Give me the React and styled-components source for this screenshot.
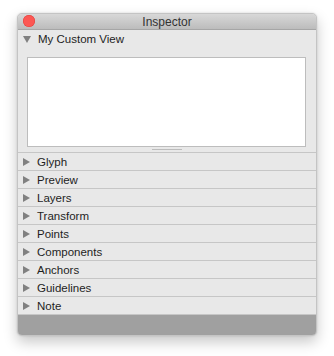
import React from 'react';
import styled, { createGlobalStyle } from 'styled-components';

const GlobalStyle = createGlobalStyle`
  body {
    margin: 0;
    background: #ffffff;
    font-family: "Liberation Sans", Arial, sans-serif;
  }
`;

const Page = styled.div`
  padding: 13px 0 0 17px;
  width: 334px;
  height: 356px;
  box-sizing: border-box;
`;

const Window = styled.div`
  width: 300px;
  box-sizing: border-box;
  border: 1px solid #c4c4c4;
  border-radius: 5px;
  overflow: hidden;
  background: #e8e8e8;
  box-shadow: 0 6px 14px rgba(0, 0, 0, 0.22), 0 0 2px rgba(0, 0, 0, 0.15);
`;

const TitleBar = styled.div`
  position: relative;
  height: 15px;
  display: flex;
  align-items: center;
  justify-content: center;
  background: linear-gradient(#d8d8d8, #bcbcbc);
  border-bottom: 1px solid #a6a6a6;
  font-size: 12px;
  color: #333333;
`;

const CloseDot = styled.span`
  position: absolute;
  left: 5px;
  top: 1px;
  width: 12px;
  height: 12px;
  border-radius: 50%;
  background: #fc5753;
  box-shadow: inset 0 0 0 0.5px #df3d39;
`;

const Row = styled.div`
  height: 17px;
  display: flex;
  align-items: center;
  padding-left: 5px;
  border-bottom: 1px solid #c6c6c6;
  font-size: 11.5px;
  color: #1e1e1e;
`;

const Header = styled(Row)`
  height: 18px;
  border-bottom: none;
`;

const Arrow = styled.span`
  width: 0;
  height: 0;
  border-style: solid;
  border-color: transparent;
  ${p => p.$open
    ? `border-width: 7px 4px 0 4px; border-top-color: #808080; margin-right: 7px;`
    : `border-width: 4px 0 4px 7px; border-left-color: #808080; margin-right: 7px;`}
`;

const Content = styled.div`
  padding: 9px 10px 0 9px;
  border-bottom: 1px solid #c6c6c6;
`;

const TextBox = styled.div`
  height: 88px;
  background: #ffffff;
  border: 1px solid #bdbdbd;
`;

const Grip = styled.div`
  display: flex;
  justify-content: center;
  padding: 2px 0 2px;
  margin-left: -9px;
  margin-right: -10px;
`;

const GripLine = styled.span`
  width: 30px;
  height: 1px;
  background: #bcbcbc;
`;

const Footer = styled.div`
  height: 20px;
  background: #a0a0a0;
`;

const sections = ['Glyph', 'Preview', 'Layers', 'Transform', 'Points', 'Components', 'Anchors', 'Guidelines', 'Note'];

export default function App() {
  return (
    <Page>
      <GlobalStyle />
      <Window>
        <TitleBar>
          <CloseDot />
          Inspector
        </TitleBar>
        <Header><Arrow $open />My Custom View</Header>
        <Content>
          <TextBox />
          <Grip><GripLine /></Grip>
        </Content>
        {sections.map(name => (
          <Row key={name}><Arrow />{name}</Row>
        ))}
        <Footer />
      </Window>
    </Page>
  );
}
